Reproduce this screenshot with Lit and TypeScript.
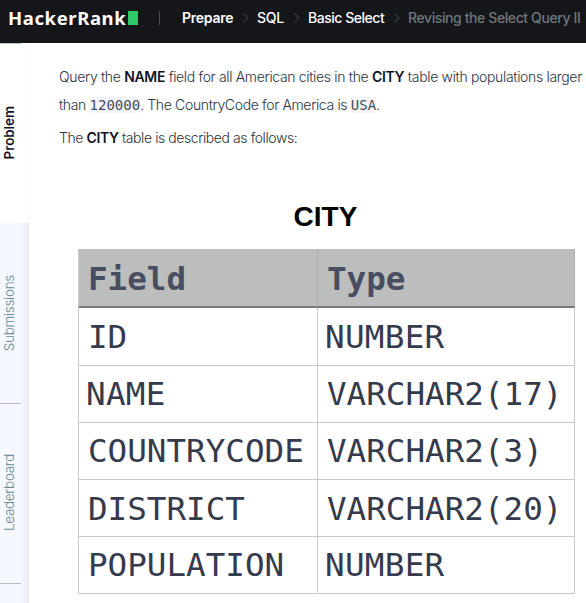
import { LitElement, html, css } from "lit";
import { customElement } from "lit/decorators.js";

const COLUMNS = [
  ["ID", "NUMBER"],
  ["NAME", "VARCHAR2(17)"],
  ["COUNTRYCODE", "VARCHAR2(3)"],
  ["DISTRICT", "VARCHAR2(20)"],
  ["POPULATION", "NUMBER"],
];

@customElement("top-bar")
class TopBar extends LitElement {
  static styles = css`
    :host { display: flex; align-items: center; height: 43px; flex: none; background: #14161a; color: #fff;
      font: 500 14px/20px Inter, sans-serif; white-space: nowrap; overflow: hidden; box-sizing: border-box; padding: 0 0 7px 8px; }
    .logo { font: 700 18.5px/24px "Noto Sans", sans-serif; letter-spacing: 0.6px; width: 120px; flex: none; margin-top: -1px; }
    .block { width: 10px; height: 14px; background: #2ec866; flex: none; }
    .bar { width: 1px; height: 14px; background: #4a4d52; margin: 0 22px 0 21px; flex: none; }
    .c { flex: none; }
    .prepare { font-weight: 600; width: 51px; letter-spacing: -0.25px; }
    .sql { width: 27px; letter-spacing: -0.3px; }
    .basic { width: 76px; letter-spacing: -0.47px; }
    .last { color: #71767c; letter-spacing: -0.4px; }
    svg { width: 24px; height: 12px; flex: none; fill: none; stroke: #34383d; stroke-width: 1.2; }
  `;
  sep() {
    return html`<svg viewBox="0 0 24 12"><path d="M10.5 1.5 L15 6 L10.5 10.5" /></svg>`;
  }
  render() {
    return html`<span class="logo">HackerRank</span><span class="block"></span><span class="bar"></span>
      <span class="c prepare">Prepare</span>${this.sep()}<span class="c sql">SQL</span>${this.sep()}<span class="c basic">Basic Select</span>${this.sep()}<span class="c last">Revising the Select Query II</span>`;
  }
}

@customElement("side-tabs")
class SideTabs extends LitElement {
  static styles = css`
    :host { display: flex; flex-direction: column; width: 29px; flex: none; overflow: hidden; background: linear-gradient(to right, #f5f8fe 0 20px, #e9ecf2 29px); font: 300 13.5px/19px Inter, sans-serif; letter-spacing: -0.3px; }
    .tab { height: 180px; flex: none; box-sizing: border-box; position: relative; display: flex; align-items: center; color: #6a8a8e; }
    .tab::after { content: ""; position: absolute; left: 0; bottom: -1px; width: 21px; height: 1px; background: #b5c0cd; }
    .tab.on { background: #fff; color: #0e141e; font-weight: 600; letter-spacing: -0.1px; border-right: 1px solid #fafafc; }
    .tab.on::after { top: 0; bottom: auto; }
    .label { writing-mode: vertical-rl; transform: rotate(180deg); }
  `;
  render() {
    return html`<div class="tab on"><span class="label">Problem</span></div>
      <div class="tab"><span class="label">Submissions</span></div>
      <div class="tab"><span class="label">Leaderboard</span></div>`;
  }
}

@customElement("schema-table")
class SchemaTable extends LitElement {
  static styles = css`
    :host { display: block; width: 497px; }
    .title { font: 700 28px/28px "Liberation Sans", sans-serif; color: #000; text-align: center; margin: 0 2px 18px 0; }
    .grid { display: grid; grid-template-columns: 239px 257px; grid-template-rows: 59px 58px 57px 57px 57px 57px;
      font: 32.6px/38px "DejaVu Sans Mono", monospace; color: #353a4c; border-left: 1px solid #c9c9c9; box-sizing: border-box; }
    .cell { box-sizing: border-box; border-right: 1px solid #c9c9c9; border-bottom: 1px solid #c9c9c9; padding: 10px 0 0 9px; white-space: nowrap; }
    .cell:nth-child(n + 5) { padding-top: 9px; }
    .cell:nth-child(9), .cell:nth-child(10) { padding-top: 10px; }
    .head { background: #bcbebd; font-weight: 700; color: #484d5f; border-color: #adafae; border-bottom: 2px solid #77797b; padding-top: 11px; }
    .nudge { padding-left: 7px; letter-spacing: 0.3px; }
  `;
  render() {
    return html`<div class="title">CITY</div>
      <div class="grid">
        <div class="cell head">Field</div><div class="cell head">Type</div>
        ${COLUMNS.map((r) => r.map((t) => html`<div class="cell ${t.startsWith("N") ? "nudge" : ""}">${t}</div>`))}
      </div>`;
  }
}

@customElement("app-root")
class AppRoot extends LitElement {
  static styles = css`
    :host { display: flex; flex-direction: column; height: 603px; overflow: hidden; background: #fff; }
    .main { display: flex; flex: 1; min-height: 0; }
    .content { flex: 1; min-width: 0; padding: 20px 0 0 30px; font: 300 14px/28px Inter, sans-serif; color: #2c333d; white-space: nowrap; overflow: hidden; }
    p { margin: 0; }
    .q1 { letter-spacing: -0.33px; }
    .q2 { letter-spacing: -0.35px; }
    .q3 { margin-top: 5px; letter-spacing: -0.42px; }
    b { font-weight: 600; color: #0e141e; }
    code { font: 14px/18px "DejaVu Sans Mono", monospace; letter-spacing: 0; color: #454d59; background: #f4f5fc; }
    schema-table { margin: 51px 0 0 19px; }
  `;
  render() {
    return html`<top-bar></top-bar>
      <div class="main">
        <side-tabs></side-tabs>
        <div class="content">
          <p class="q1">Query the <b>NAME</b> field for all American cities in the <b>CITY</b> table with populations larger</p>
          <p class="q2">than <code>120000</code>. The CountryCode for America is <code>USA</code>.</p>
          <p class="q3">The <b>CITY</b> table is described as follows:</p>
          <schema-table></schema-table>
        </div>
      </div>`;
  }
}
